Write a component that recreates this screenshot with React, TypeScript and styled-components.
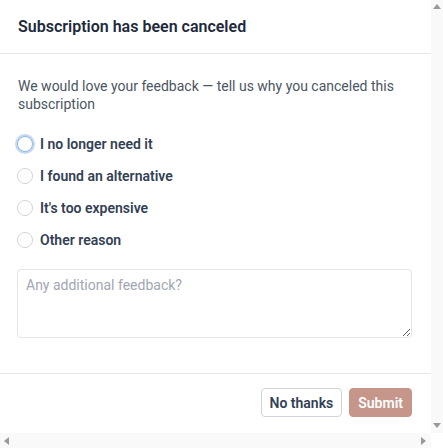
import React, { useState } from "react";
import styled, { createGlobalStyle } from "styled-components";

const Global = createGlobalStyle`
  html, body { margin: 0; padding: 0; background: #fff; }
  body { font-family: Roboto, "Noto Sans", sans-serif; }
  * { box-sizing: border-box; }
`;

const ARROW = "#999999";
const TRACK = "#f9f9f9";

const Frame = styled.div`
  width: 100vw;
  height: 100vh;
  display: grid;
  grid-template-columns: 1fr 12px;
  grid-template-rows: 1fr 15px;
  background: #fff;
`;

const Main = styled.div`
  overflow: hidden;
  min-width: 0;
  min-height: 0;
`;

const VScroll = styled.div`
  background: ${TRACK};
  display: flex;
  flex-direction: column;
  justify-content: space-between;
  align-items: center;
  padding: 4px 0 5px;
`;

const HScroll = styled.div`
  background: ${TRACK};
  display: flex;
  justify-content: space-between;
  align-items: center;
  padding: 0 5px 0 4px;
`;

const Corner = styled.div`
  background: #fff;
`;

const Arrow = styled.span<{ $dir: "up" | "down" | "left" | "right" }>`
  width: 0;
  height: 0;
  display: block;
  ${(p) =>
    p.$dir === "up"
      ? `border-left: 4px solid transparent; border-right: 4px solid transparent; border-bottom: 5px solid ${ARROW};`
      : p.$dir === "down"
      ? `border-left: 4px solid transparent; border-right: 4px solid transparent; border-top: 5px solid ${ARROW};`
      : p.$dir === "left"
      ? `border-top: 4px solid transparent; border-bottom: 4px solid transparent; border-right: 5px solid ${ARROW};`
      : `border-top: 4px solid transparent; border-bottom: 4px solid transparent; border-left: 5px solid ${ARROW};`}
`;

const Dialog = styled.div`
  display: flex;
  flex-direction: column;
  background: #fff;
`;

const Header = styled.div`
  padding: 16px 18px 15px;
  border-bottom: 1px solid #e5e7eb;
`;

const Title = styled.h2`
  margin: 0;
  font-size: 16px;
  line-height: 22px;
  font-weight: 600;
  color: #1e293b;
`;

const Body = styled.div`
  padding: 23px 19px 35px 17px;
  display: flex;
  flex-direction: column;
`;

const Description = styled.p`
  margin: 0 0 21px 1px;
  font-size: 14px;
  line-height: 18px;
  color: #4b5563;
`;

const Options = styled.div`
  display: flex;
  flex-direction: column;
  gap: 12px;
  margin-bottom: 19px;
`;

const Option = styled.label`
  display: flex;
  align-items: center;
  gap: 7px;
  height: 20px;
  cursor: pointer;
  font-size: 14px;
  font-weight: 600;
  color: #334155;
`;

const Radio = styled.span<{ $focused?: boolean }>`
  width: 16px;
  height: 16px;
  border-radius: 50%;
  border: 1px solid ${(p) => (p.$focused ? "#8fb8e8" : "#cfd3da")};
  background: #fff;
  flex: none;
  box-shadow: ${(p) => (p.$focused ? "0 0 0 2px #c3d9f3" : "none")};
`;

const TextArea = styled.textarea`
  display: block;
  width: 100%;
  height: 69px;
  border: 1px solid #e2e5ea;
  border-radius: 4px;
  padding: 6px 8px;
  font-family: inherit;
  font-size: 14px;
  line-height: 18px;
  color: #374151;
  resize: vertical;
  outline: none;
  &::placeholder { color: #a0a7b3; }
`;

const Footer = styled.div`
  border-top: 1px solid #e5e7eb;
  padding: 14px 19px 14px 17px;
  display: flex;
  justify-content: flex-end;
  gap: 7px;
`;

const Button = styled.button<{ $primary?: boolean }>`
  height: 29px;
  padding: 0 8px;
  border-radius: 4px;
  font-family: inherit;
  font-size: 14px;
  font-weight: 600;
  cursor: pointer;
  border: 1px solid ${(p) => (p.$primary ? "#c6968a" : "#d1d5db")};
  background: ${(p) => (p.$primary ? "#c6968a" : "#fff")};
  color: ${(p) => (p.$primary ? "#fff" : "#334155")};
`;

const reasons = [
  "I no longer need it",
  "I found an alternative",
  "It's too expensive",
  "Other reason",
];

export default function App() {
  const [text, setText] = useState("");
  return (
    <>
      <Global />
      <Frame>
        <Main>
          <Dialog>
            <Header>
              <Title>Subscription has been canceled</Title>
            </Header>
            <Body>
              <Description>
                We would love your feedback — tell us why you canceled this subscription
              </Description>
              <Options>
                {reasons.map((r, i) => (
                  <Option key={r}>
                    <Radio $focused={i === 0} />
                    {r}
                  </Option>
                ))}
              </Options>
              <TextArea
                placeholder="Any additional feedback?"
                value={text}
                onChange={(e) => setText(e.target.value)}
              />
            </Body>
            <Footer>
              <Button>No thanks</Button>
              <Button $primary>Submit</Button>
            </Footer>
          </Dialog>
        </Main>
        <VScroll>
          <Arrow $dir="up" />
          <Arrow $dir="down" />
        </VScroll>
        <HScroll>
          <Arrow $dir="left" />
          <Arrow $dir="right" />
        </HScroll>
        <Corner />
      </Frame>
    </>
  );
}
